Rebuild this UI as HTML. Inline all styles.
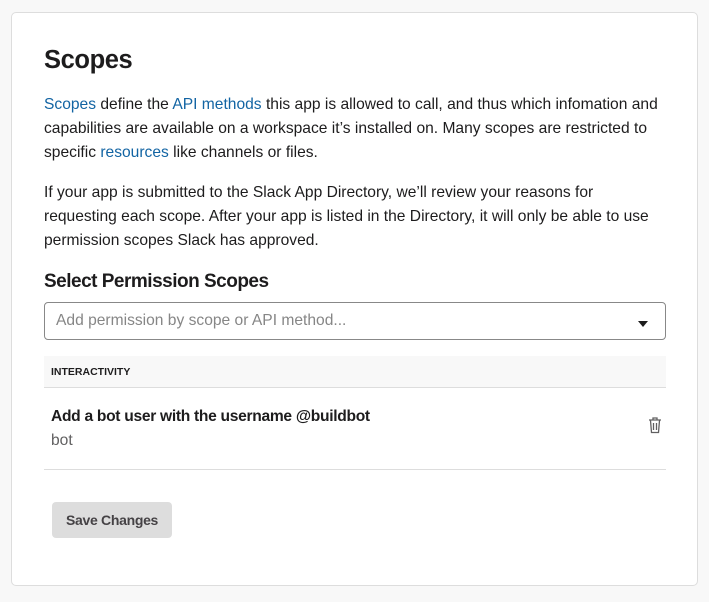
<!DOCTYPE html>
<html><head><style>
body{margin:0;background:#f8f8f8;font-family:"Liberation Sans",sans-serif;color:#1d1c1d;}
.card{position:absolute;left:11px;top:12px;width:685px;height:572px;background:#fff;border:1px solid #ddd;border-radius:5px;}
.abs{position:absolute;white-space:nowrap;}
a{color:#1264a3;text-decoration:none}
p{position:absolute;left:32px;margin:0;font-size:15.6px;line-height:24px;letter-spacing:0;color:#1d1c1d;width:660px}
</style></head><body>
<div class="card">
<div class="abs" style="left:32px;top:33px;font-size:25.5px;font-weight:bold;letter-spacing:-0.4px">Scopes</div>
<p style="top:80px">
<a>Scopes</a> define the <a>API methods</a> this app is allowed to call, and thus which infomation and<br>capabilities are available on a workspace it’s installed on. Many scopes are restricted to<br>specific <a>resources</a> like channels or files.</p>
<p style="top:168px">If your app is submitted to the Slack App Directory, we’ll review your reasons for<br>requesting each scope. After your app is listed in the Directory, it will only be able to use<br>permission scopes Slack has approved.</p>
<div class="abs" style="left:32px;top:258px;font-size:19px;font-weight:bold;letter-spacing:-0.5px">Select Permission Scopes</div>
<div class="abs" style="left:32px;top:289px;width:620px;height:36px;border:1px solid #888;border-radius:4px;"></div>
<div class="abs" style="left:44px;top:299px;font-size:15.6px;color:#868686">Add permission by scope or API method...</div>
<div class="abs" style="left:626px;top:308px;width:0;height:0;border-left:5px solid transparent;border-right:5px solid transparent;border-top:6px solid #1d1c1d"></div>
<div class="abs" style="left:32px;top:343px;width:622px;height:31px;background:#f8f8f8;border-bottom:1px solid #ddd"></div>
<div class="abs" style="left:39px;top:353px;font-size:10.5px;font-weight:bold;letter-spacing:0">INTERACTIVITY</div>
<div class="abs" style="left:39px;top:395px;font-size:15.6px;font-weight:bold;letter-spacing:-0.3px">Add a bot user with the username @buildbot</div>
<div class="abs" style="left:39px;top:419px;font-size:15.6px;color:#616061">bot</div>
<svg class="abs" style="left:636px;top:403px" width="14" height="18" viewBox="0 0 14 18" fill="none" stroke="#616061" stroke-width="1.3"><path d="M1 4h12M5 4V2h4v2M2.5 4.5l1 12h7l1-12M5.5 7v7M8.5 7v7"/></svg>
<div class="abs" style="left:32px;top:456px;width:622px;border-top:1px solid #ddd"></div>
<div class="abs" style="left:40px;top:489px;width:120px;height:36px;background:#ddd;border-radius:4px;font-size:14px;font-weight:bold;color:#454245;text-align:center;line-height:36px;letter-spacing:-0.3px">Save Changes</div>
</div>
</body></html>
